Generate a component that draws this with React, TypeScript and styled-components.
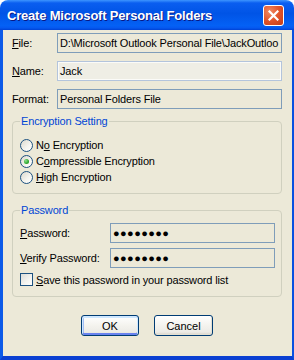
import styled, { createGlobalStyle } from 'styled-components'

const GlobalStyle = createGlobalStyle`
  html, body {
    margin: 0;
    padding: 0;
    background: #ffffff;
  }
  body {
    font-family: "Liberation Sans", Arial, sans-serif;
    font-size: 11px;
    letter-spacing: -0.15px;
    color: #000;
  }
`

const Window = styled.div`
  width: 294px;
  height: 360px;
  display: flex;
  flex-direction: column;
`

const TitleBar = styled.div`
  height: 30px;
  flex: none;
  box-sizing: border-box;
  display: flex;
  align-items: center;
  justify-content: space-between;
  padding: 1px 10px 0 7px;
  border-radius: 8px 8px 0 0;
  background: linear-gradient(180deg, #3d95ff 0%, #0a5ef0 10%, #0054e6 45%, #0461f5 85%, #0559f0 93%, #0041d4 100%);
`

const Title = styled.span`
  color: #fff;
  font-weight: bold;
  font-size: 13px;
  letter-spacing: -0.2px;
  text-shadow: 1px 1px 0 #0a1883;
`

const CloseButton = styled.div`
  width: 21px;
  height: 21px;
  box-sizing: border-box;
  border: 1px solid #fff;
  border-radius: 3px;
  background: radial-gradient(circle at 30% 30%, #f08a64 0%, #e2542a 50%, #c43c16 100%);
  display: flex;
  align-items: center;
  justify-content: center;
`

const Body = styled.div`
  flex: 1;
  box-sizing: border-box;
  background: #ece9d8;
  border-left: 3px solid #0c5ae8;
  border-right: 2px solid #0a50e0;
  border-bottom: 4px solid #0a3fd2;
  padding: 3px 10px 0 9px;
  display: flex;
  flex-direction: column;
`

const FieldRow = styled.div`
  display: grid;
  grid-template-columns: 45px 1fr;
  align-items: center;
  height: 20px;
  margin-bottom: 8px;
`

const FieldBox = styled.div<{ $edit?: boolean }>`
  height: 20px;
  box-sizing: border-box;
  border: 1px solid ${p => (p.$edit ? '#b3c4dc' : '#7f9db9')};
  box-shadow: ${p => (p.$edit ? 'inset 0 0 0 1px #fbfbf8' : 'none')};
  background: ${p => (p.$edit ? '#efeee5' : '#ece9d8')};
  padding: 0 2px;
  display: flex;
  align-items: center;
  white-space: nowrap;
  overflow: hidden;
`

const Group = styled.fieldset<{ $top: number; $pt: number; $pb: number }>`
  margin: ${p => p.$top}px 0 0 0;
  min-width: 0;
  border: 1px solid #d0d0bf;
  border-radius: 4px;
  padding: ${p => p.$pt}px 6px ${p => p.$pb}px 7px;
`

const Legend = styled.legend`
  color: #0046d5;
  padding: 0 1px;
  line-height: 13px;
`

const OptionRow = styled.label`
  display: flex;
  align-items: center;
  gap: 3px;
  height: 16px;
`

const Radio = styled.span<{ $checked?: boolean }>`
  width: 13px;
  height: 13px;
  box-sizing: border-box;
  border: 1px solid #1c5180;
  border-radius: 50%;
  background: linear-gradient(135deg, #dcd9cd 0%, #f6f5f0 60%, #ffffff 100%);
  display: flex;
  align-items: center;
  justify-content: center;
  &::after {
    content: '';
    display: ${p => (p.$checked ? 'block' : 'none')};
    width: 5px;
    height: 5px;
    border-radius: 50%;
    background: radial-gradient(circle at 35% 35%, #8ee08e 0%, #2ea82e 60%, #1c8c1c 100%);
  }
`

const PasswordRow = styled.div`
  display: grid;
  grid-template-columns: 90px 1fr;
  align-items: center;
  height: 20px;
  margin-bottom: 5px;
`

const Dots = styled(FieldBox)`
  font-size: 11px;
  letter-spacing: 0.4px;
  padding-left: 2px;
`

const CheckRow = styled.label`
  display: flex;
  align-items: center;
  gap: 3px;
  height: 13px;
  margin-top: 4px;
`

const Checkbox = styled.span`
  width: 13px;
  height: 13px;
  box-sizing: border-box;
  border: 1px solid #1c5180;
  background: linear-gradient(135deg, #dcdcd7 0%, #f4f4f0 60%, #ffffff 100%);
`

const ButtonBar = styled.div`
  display: flex;
  justify-content: center;
  gap: 15px;
  margin-top: 18px;
`

const Button = styled.button<{ $w: number; $default?: boolean }>`
  width: ${p => p.$w}px;
  height: 21px;
  box-sizing: border-box;
  padding: 0;
  border: 1px solid #003c74;
  border-radius: 3px;
  font-family: "Liberation Sans", Arial, sans-serif;
  font-size: 11px;
  color: #000;
  background: linear-gradient(180deg, #ffffff 0%, #f4f3ee 50%, #ecebe6 85%, #d6d0c5 100%);
  box-shadow: ${p =>
    p.$default
      ? 'inset 0 1px 0 1px #cee7ff, inset 0 -1px 0 1px #6982ee, inset 1px 0 0 1px #a4bff5'
      : 'inset -1px -1px 0 #e3e0d2'};
`

export default function App() {
  return (
    <>
      <GlobalStyle />
      <Window>
        <TitleBar>
          <Title>Create Microsoft Personal Folders</Title>
          <CloseButton>
            <svg width="11" height="11" viewBox="0 0 11 11">
              <path d="M1.5 1.5 L9.5 9.5 M9.5 1.5 L1.5 9.5" stroke="#fff" strokeWidth="2.2" strokeLinecap="square" />
            </svg>
          </CloseButton>
        </TitleBar>
        <Body>
          <FieldRow>
            <span><u>F</u>ile:</span>
            <FieldBox>D:\Microsoft Outlook Personal File\JackOutloo</FieldBox>
          </FieldRow>
          <FieldRow>
            <span><u>N</u>ame:</span>
            <FieldBox $edit>Jack</FieldBox>
          </FieldRow>
          <FieldRow style={{ marginBottom: 0 }}>
            <span>Format:</span>
            <FieldBox>Personal Folders File</FieldBox>
          </FieldRow>

          <Group $top={6} $pt={9} $pb={8}>
            <Legend>Encryption Setting</Legend>
            <OptionRow><Radio /><span>N<u>o</u> Encryption</span></OptionRow>
            <OptionRow><Radio $checked /><span>C<u>o</u>mpressible Encryption</span></OptionRow>
            <OptionRow><Radio /><span><u>H</u>igh Encryption</span></OptionRow>
          </Group>

          <Group $top={10} $pt={6} $pb={10}>
            <Legend>Password</Legend>
            <PasswordRow>
              <span><u>P</u>assword:</span>
              <Dots>●●●●●●●●</Dots>
            </PasswordRow>
            <PasswordRow>
              <span><u>V</u>erify Password:</span>
              <Dots>●●●●●●●●</Dots>
            </PasswordRow>
            <CheckRow><Checkbox /><span><u>S</u>ave this password in your password list</span></CheckRow>
          </Group>

          <ButtonBar>
            <Button $w={58} $default>OK</Button>
            <Button $w={59}>Cancel</Button>
          </ButtonBar>
        </Body>
      </Window>
    </>
  )
}
